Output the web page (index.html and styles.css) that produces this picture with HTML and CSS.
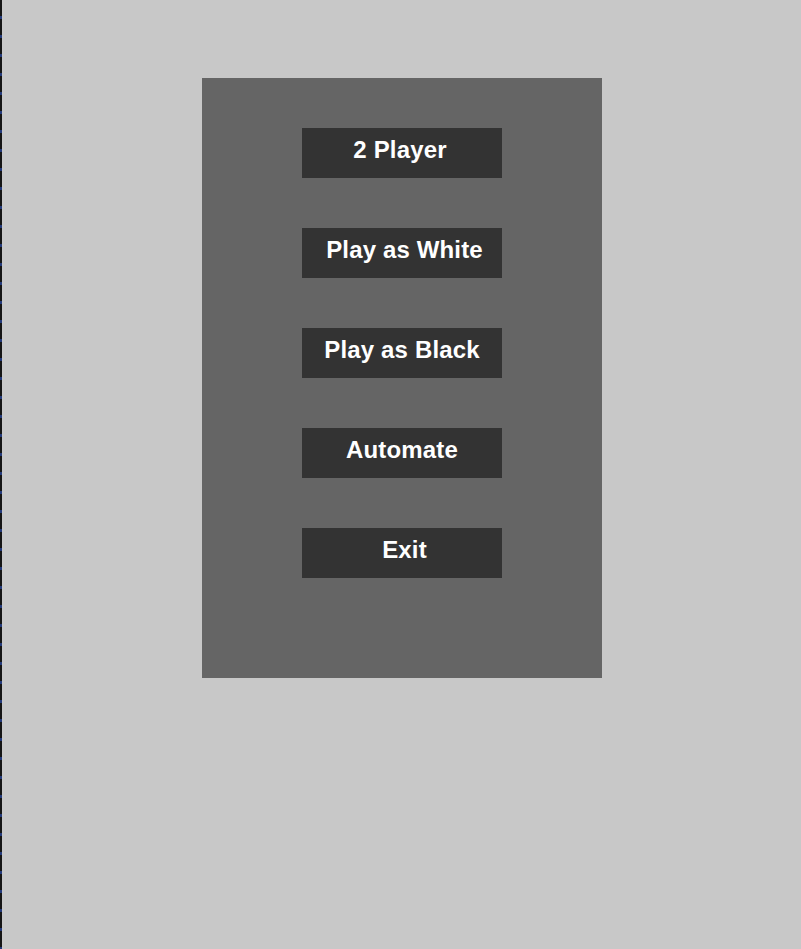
FILE: index.html
```html
<!DOCTYPE html>
<html>
<head>
<meta charset="utf-8">
<link rel="stylesheet" href="styles.css">
</head>
<body>
<div class="screen">
  <div class="edge"></div>
  <main class="stage">
    <div class="menu">
      <button class="btn btn-left">2 Player</button>
      <button class="btn btn-right">Play as White</button>
      <button class="btn">Play as Black</button>
      <button class="btn">Automate</button>
      <button class="btn btn-right">Exit</button>
    </div>
  </main>
</div>
</body>
</html>
```

FILE: styles.css
```css
html, body {
  margin: 0;
  padding: 0;
  height: 100%;
  background: #c8c8c8;
}
.screen {
  display: flex;
  min-height: 949px;
}
.edge {
  width: 2px;
  flex: none;
  background-color: #161616;
  background-image: repeating-linear-gradient(to bottom, transparent 0, transparent 16px, #243a7a 16px, #243a7a 19px);
}
.stage {
  flex: 1;
  padding: 78px 0 0 200px;
}
.menu {
  width: 400px;
  height: 600px;
  box-sizing: border-box;
  background: #656565;
  padding-top: 50px;
  display: flex;
  flex-direction: column;
  align-items: center;
  gap: 50px;
}
.btn {
  width: 200px;
  height: 50px;
  box-sizing: border-box;
  border: 0;
  margin: 0;
  padding: 0 0 6px 0;
  background: #333333;
  color: #ffffff;
  font-family: "Liberation Sans", Arial, sans-serif;
  font-weight: bold;
  font-size: 24px;
  line-height: 44px;
  letter-spacing: 0.15px;
  text-align: center;
}
.btn-right {
  padding-left: 5px;
}
.btn-left {
  padding-right: 4px;
}
```
